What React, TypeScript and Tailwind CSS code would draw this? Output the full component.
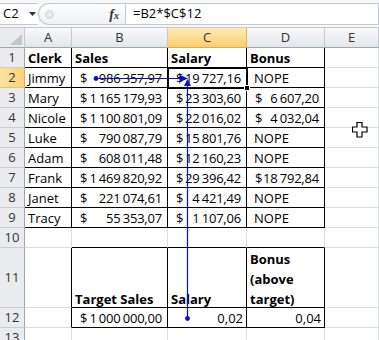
import type { ReactNode } from 'react'

// ── grid constants ───────────────────────────────────────────────────────────

const COLS = 'grid grid-cols-[25px_47px_96px_79px_78px_54px]'

// border presets: right / bottom edges of a cell
const EDGE = {
  bb: 'border-r border-b border-r-black border-b-black',
  gg: 'border-r border-b border-r-[#dadcdf] border-b-[#dadcdf]',
  gb: 'border-r border-b border-r-[#dadcdf] border-b-black',
  bg: 'border-r border-b border-r-black border-b-[#dadcdf]',
}
type Edge = keyof typeof EDGE

const people: [string, string, string, string | null][] = [
  ['Jimmy', '986 357,97', '19 727,16', null],
  ['Mary', '1 165 179,93', '23 303,60', '6 607,20'],
  ['Nicole', '1 100 801,09', '22 016,02', '4 032,04'],
  ['Luke', '790 087,79', '15 801,76', null],
  ['Adam', '608 011,48', '12 160,23', null],
  ['Frank', '1 469 820,92', '29 396,42', '18 792,84'],
  ['Janet', '221 074,61', '4 421,49', null],
  ['Tracy', '55 353,07', '1 107,06', null],
]

// ── small pieces ─────────────────────────────────────────────────────────────

function Cell({ edge, className = '', children }: { edge: Edge; className?: string; children?: ReactNode }) {
  return <div className={`${EDGE[edge]} flex items-center pt-[2px] whitespace-nowrap ${className}`}>{children}</div>
}

// accounting format: "$" pinned left, amount pinned right
function Money({ v }: { v: string }) {
  return (
    <Cell edge="bb" className="justify-between pl-[8px] pr-[5px]">
      <span>$</span>
      <span className="tracking-[-0.2px] [word-spacing:-1px]">{v}</span>
    </Cell>
  )
}

// bottom-aligned header text of row 11
function Label({ children }: { children: ReactNode }) {
  return (
    <div className={`${EDGE.bb} flex flex-col justify-end pl-[3px] font-bold leading-[20px]`}>
      <div className="flex flex-col translate-y-[2px]">{children}</div>
    </div>
  )
}

function RowHead({ n, active }: { n: number; active?: boolean }) {
  return (
    <div
      className={`flex items-center justify-center border-r border-b text-[#333] ${
        active
          ? 'bg-linear-to-r from-[#fbe3a3] to-[#f8d27c] border-r-[#e9a93f] border-b-[#f0c070]'
          : 'bg-[#e9ebee] border-r-[#9ea6b0] border-b-[#c9cdd3]'
      }`}
    >
      {n}
    </div>
  )
}

function ColHead({ l, active }: { l: string; active?: boolean }) {
  return (
    <div
      className={`flex items-center justify-center border-r border-b text-[#333] ${
        active
          ? 'bg-linear-to-b from-[#fdebb6] to-[#f8cd70] border-r-[#e9b04f] border-b-[#e9a93f]'
          : 'bg-linear-to-b from-[#f7f8f9] to-[#e3e6ea] border-r-[#c5c9cf] border-b-[#9ea6b0]'
      }`}
    >
      {l}
    </div>
  )
}

// ── App ───────────────────────────────────────────────────────────────────────

export default function App() {
  return (
    <div className="relative w-[379px] h-[340px] overflow-hidden bg-white text-[13px] text-black font-['Open_Sans','Liberation_Sans',sans-serif]">
      {/* formula bar */}
      <div className="flex h-[28px] bg-[#f6f7f9] border-b border-[#c4cad2]">
        <div className="mt-[3px] h-[22px] w-[38px] bg-white border-y border-[#c3c9d1] flex items-center pl-[3px]">
          <span>C2</span>
          <svg width="7" height="4" className="ml-[10px]" viewBox="0 0 7 4">
            <polygon points="0,0 7,0 3.5,4" fill="#333" />
          </svg>
        </div>
        <div className="mt-[3px] h-[22px] w-[87px] rounded-l-[11px] border border-r-0 border-[#c3c9d1] bg-linear-to-b from-white to-[#eef0f3] flex items-center pl-[6px]">
          <div className="w-[9px] h-[9px] rounded-full bg-radial from-[#f4f4f4] to-[#c9ccd0]" />
          <span className="ml-auto mr-[6px] font-['Liberation_Serif',serif] italic font-bold text-[14px] text-[#333]">
            f<span className="text-[10px]">x</span>
          </span>
        </div>
        <div className="mt-[3px] h-[22px] flex-1 bg-white border border-[#c3c9d1] flex items-center pl-[7px]">
          =B2*$C$12
        </div>
      </div>

      {/* sheet */}
      <div className={`${COLS} grid-rows-[20px_repeat(10,20px)_60px_20px_20px]`}>
        {/* column headers */}
        <div className="relative bg-[#e9ebee] border-r border-b border-r-[#c5c9cf] border-b-[#9ea6b0]">
          <svg width="12" height="11" viewBox="0 0 12 11" className="absolute right-[2px] bottom-[2px]">
            <polygon points="12,0 12,11 0,11" fill="#c3c7cc" />
          </svg>
        </div>
        <ColHead l="A" />
        <ColHead l="B" />
        <ColHead l="C" active />
        <ColHead l="D" />
        <ColHead l="E" />

        {/* row 1 */}
        <RowHead n={1} />
        <Cell edge="bb" className="pl-[3px] font-bold">Clerk</Cell>
        <Cell edge="bb" className="pl-[3px] font-bold">Sales</Cell>
        <Cell edge="bb" className="pl-[3px] font-bold">Salary</Cell>
        <Cell edge="bb" className="pl-[3px] font-bold">Bonus</Cell>
        <Cell edge="gg" />

        {/* rows 2-9 */}
        {people.map(([name, sales, salary, bonus], i) => (
          <div key={name} className="contents">
            <RowHead n={i + 2} active={i === 0} />
            <Cell edge="bb" className="pl-[3px]">{name}</Cell>
            <Money v={sales} />
            <Money v={salary} />
            {bonus ? <Money v={bonus} /> : <Cell edge="bb" className="pl-[7px]">NOPE</Cell>}
            <Cell edge="gg" />
          </div>
        ))}

        {/* row 10 */}
        <RowHead n={10} />
        <Cell edge="gg" />
        <Cell edge="gb" />
        <Cell edge="gb" />
        <Cell edge="gb" />
        <Cell edge="gg" />

        {/* row 11 */}
        <RowHead n={11} />
        <Cell edge="bg" />
        <Label>Target Sales</Label>
        <Label>Salary</Label>
        <Label>
          <span>Bonus</span>
          <span>(above</span>
          <span>target)</span>
        </Label>
        <Cell edge="gg" />

        {/* row 12 */}
        <RowHead n={12} />
        <Cell edge="bg" />
        <Money v="1 000 000,00" />
        <Cell edge="bb" className="justify-end pr-[3px]">0,02</Cell>
        <Cell edge="bb" className="justify-end pr-[3px]">0,04</Cell>
        <Cell edge="gg" />

        {/* row 13 */}
        <RowHead n={13} />
        <Cell edge="gg" />
        <Cell edge="gg" />
        <Cell edge="gg" />
        <Cell edge="gg" />
        <Cell edge="gg" />
      </div>

      {/* active cell outline on C2 + fill handle */}
      <div className="absolute left-[167px] top-[67px] w-[81px] h-[22px] border-2 border-black">
        <div className="w-full h-full border border-white" />
      </div>
      <div className="absolute left-[244px] top-[85px] w-[6px] h-[6px] bg-black border border-white" />

      {/* trace precedents arrows */}
      <svg className="absolute inset-0 pointer-events-none" width="379" height="340" viewBox="0 0 379 340">
        <line x1="96" y1="78.5" x2="181" y2="78.5" stroke="#0a0ae0" strokeWidth="1.2" />
        <polygon points="188,78.5 180,75 180,82" fill="#0a0ae0" />
        <circle cx="96" cy="78.5" r="2.4" fill="#0a0ae0" />
        <line x1="187.5" y1="318.5" x2="187.5" y2="86" stroke="#0a0ae0" strokeWidth="1.2" />
        <polygon points="187.5,79 184,86 191,86" fill="#0a0ae0" />
        <circle cx="187.5" cy="318.5" r="2.4" fill="#0a0ae0" />
      </svg>

      {/* fat-cross mouse pointer */}
      <svg className="absolute left-[352px] top-[122px]" width="16" height="16" viewBox="0 0 16 16">
        <polygon
          points="5,0.5 10,0.5 10,5 15,5 15,10 10,10 10,15 5,15 5,10 0.5,10 0.5,5 5,5"
          fill="white"
          stroke="black"
          strokeWidth="1.2"
        />
      </svg>
    </div>
  )
}
